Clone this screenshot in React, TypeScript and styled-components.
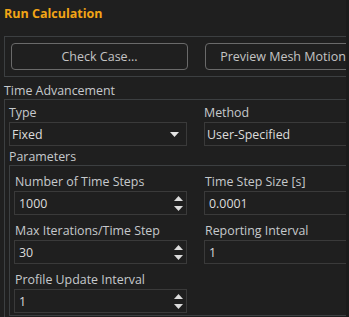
import React from 'react';
import styled, { createGlobalStyle } from 'styled-components';

const GlobalStyle = createGlobalStyle`
  html, body {
    margin: 0;
    padding: 0;
    background: #1b1b1b;
  }
  body {
    font-family: "Open Sans", "Noto Sans", sans-serif;
    font-size: 12.4px;
  }
`;

const Panel = styled.div`
  width: 346px;
  height: 317px;
  overflow: hidden;
  background: #1f1f1f;
  box-sizing: border-box;
  padding: 4px 0 0 4px;
`;

const Column = styled.div`
  width: 420px;
  display: flex;
  flex-direction: column;
`;

const Title = styled.div`
  color: #f2a516;
  font-weight: 700;
  font-size: 12.5px;
  line-height: 20px;
  height: 20px;
`;

const ButtonBox = styled.div`
  margin-top: 12px;
  border: 1px solid #3c3f41;
  padding: 6px;
  display: flex;
  gap: 17px;
`;

const ActionButton = styled.button<{ $w: number }>`
  width: ${(p) => p.$w}px;
  height: 27px;
  flex: none;
  border: 1px solid #6a6a6a;
  border-radius: 4px;
  background: transparent;
  color: #c4c4c4;
  font-family: inherit;
  font-size: 12.5px;
  padding: 0;
  white-space: nowrap;
`;

const SectionLabel = styled.div<{ $top?: number }>`
  color: #c6c9cc;
  line-height: 16px;
  height: 16px;
  margin-top: ${(p) => p.$top ?? 0}px;
`;

const Group = styled.div<{ $pad: string }>`
  border: 1px solid #3c3f41;
  padding: ${(p) => p.$pad};
  display: flex;
  flex-direction: column;
`;

const FieldGrid = styled.div<{ $col: number }>`
  display: grid;
  grid-template-columns: ${(p) => p.$col}px ${(p) => p.$col}px;
  column-gap: 17px;
  row-gap: 7px;
`;

const Field = styled.div`
  display: flex;
  flex-direction: column;
`;

const FieldLabel = styled.div<{ $h: number; $indent: number }>`
  color: #c6c9cc;
  line-height: ${(p) => p.$h}px;
  height: ${(p) => p.$h}px;
  padding-left: ${(p) => p.$indent}px;
  margin-bottom: 1px;
  white-space: nowrap;
`;

const InputBox = styled.div<{ $indent: number }>`
  height: 24px;
  box-sizing: border-box;
  border: 1px solid #3a3a3a;
  background: #1f1f1f;
  display: flex;
  align-items: center;
  justify-content: space-between;
  padding: 0 2px 0 ${(p) => p.$indent}px;
  color: #dcdcdc;
  white-space: nowrap;
`;

const Spinner = styled.div`
  display: flex;
  flex-direction: column;
  gap: 5px;
  margin-right: 1px;
`;

const Caret = () => (
  <svg width="9" height="5" viewBox="0 0 9 5" style={{ marginRight: 5 }}>
    <path d="M0 0H9L4.5 5Z" fill="#e4e4e4" />
  </svg>
);

const SpinArrows = () => (
  <Spinner>
    <svg width="9" height="5" viewBox="0 0 9 5">
      <path d="M0 5H9L4.5 0Z" fill="#dcdcdc" />
    </svg>
    <svg width="9" height="5" viewBox="0 0 9 5">
      <path d="M0 0H9L4.5 5Z" fill="#dcdcdc" />
    </svg>
  </Spinner>
);

type P = { label: string; value: string; kind?: 'select' | 'spin' | 'text' };

const ParamField: React.FC<P> = ({ label, value, kind = 'text' }) => (
  <Field>
    <FieldLabel $h={17} $indent={1}>{label}</FieldLabel>
    <InputBox $indent={4}>
      <span>{value}</span>
      {kind === 'spin' && <SpinArrows />}
    </InputBox>
  </Field>
);

const TopField: React.FC<P> = ({ label, value, kind = 'text' }) => (
  <Field>
    <FieldLabel $h={16} $indent={0}>{label}</FieldLabel>
    <InputBox $indent={2}>
      <span>{value}</span>
      {kind === 'select' && <Caret />}
    </InputBox>
  </Field>
);

export default function App() {
  return (
    <>
      <GlobalStyle />
      <Panel>
        <Column>
          <Title>Run Calculation</Title>
          <ButtonBox>
            <ActionButton $w={177}>Check Case...</ActionButton>
            <ActionButton $w={156}>Preview Mesh Motion</ActionButton>
          </ButtonBox>
          <SectionLabel $top={6}>Time Advancement</SectionLabel>
          <Group $pad="5px 4px 1px 4px">
            <FieldGrid $col={178}>
              <TopField label="Type" value="Fixed" kind="select" />
              <TopField label="Method" value="User-Specified" />
            </FieldGrid>
            <SectionLabel $top={3}>Parameters</SectionLabel>
            <Group $pad="7px 4px 2px 4px">
              <FieldGrid $col={173}>
                <ParamField label="Number of Time Steps" value="1000" kind="spin" />
                <ParamField label="Time Step Size [s]" value="0.0001" />
                <ParamField label="Max Iterations/Time Step" value="30" kind="spin" />
                <ParamField label="Reporting Interval" value="1" />
                <ParamField label="Profile Update Interval" value="1" kind="spin" />
              </FieldGrid>
            </Group>
          </Group>
        </Column>
      </Panel>
    </>
  );
}
